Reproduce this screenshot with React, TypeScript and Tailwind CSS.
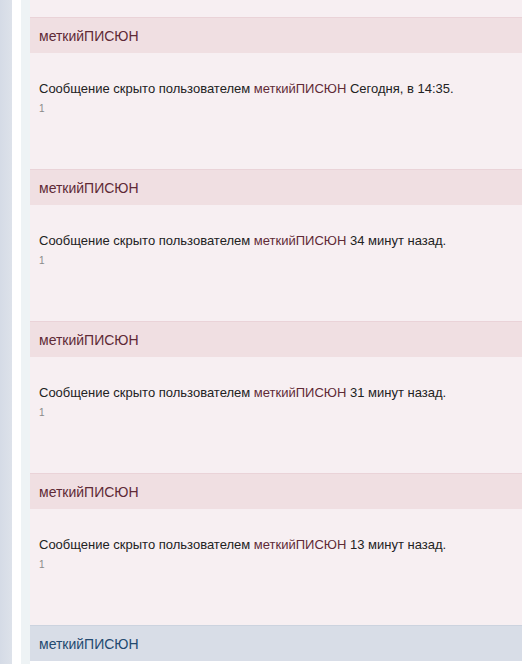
import React from "react";

const posts = [
  "Сегодня, в 14:35.",
  "34 минут назад.",
  "31 минут назад.",
  "13 минут назад.",
];

function Post({ time }: { time: string }) {
  return (
    <div>
      <div className="h-[36px] border-t border-[#ead3d8] bg-[#f0dfe2] flex items-center pl-[9px] pt-[1px]">
        <span className="text-[14px] leading-none text-[#5f2a36]">меткийПИСЮН</span>
      </div>
      <div className="h-[116px] bg-[#f7eff2] pl-[9px] pt-[28px]">
        <div className="text-[13px] leading-[16px] text-[#222222]">
          Сообщение скрыто пользователем{" "}
          <span className="text-[#5f2a36]">меткийПИСЮН</span> {time}
        </div>
        <div className="text-[10px] leading-[12px] text-[#8a8a8a] mt-[6px]">1</div>
      </div>
    </div>
  );
}

export default function App() {
  return (
    <div
      className="w-[522px] h-[664px] overflow-hidden flex bg-white"
      style={{ fontFamily: '"Liberation Sans", Arial, sans-serif' }}
    >
      <div className="w-[12px] bg-gradient-to-r from-[#d5dbe6] to-[#dde2ea]" />
      <div className="w-[9px] bg-white" />
      <div className="w-[9px] bg-[#eef3f5]" />
      <div className="flex-1 flex flex-col">
        <div className="h-[17px] bg-[#f7eff2]" />
        {posts.map((t, i) => (
          <Post key={i} time={t} />
        ))}
        <div className="h-[36px] border-t border-[#ccd3df] bg-[#d8dde7] flex items-center pl-[9px] pt-[1px]">
          <span className="text-[14px] leading-none text-[#234a70]">меткийПИСЮН</span>
        </div>
        <div className="flex-1 bg-white" />
      </div>
    </div>
  );
}
